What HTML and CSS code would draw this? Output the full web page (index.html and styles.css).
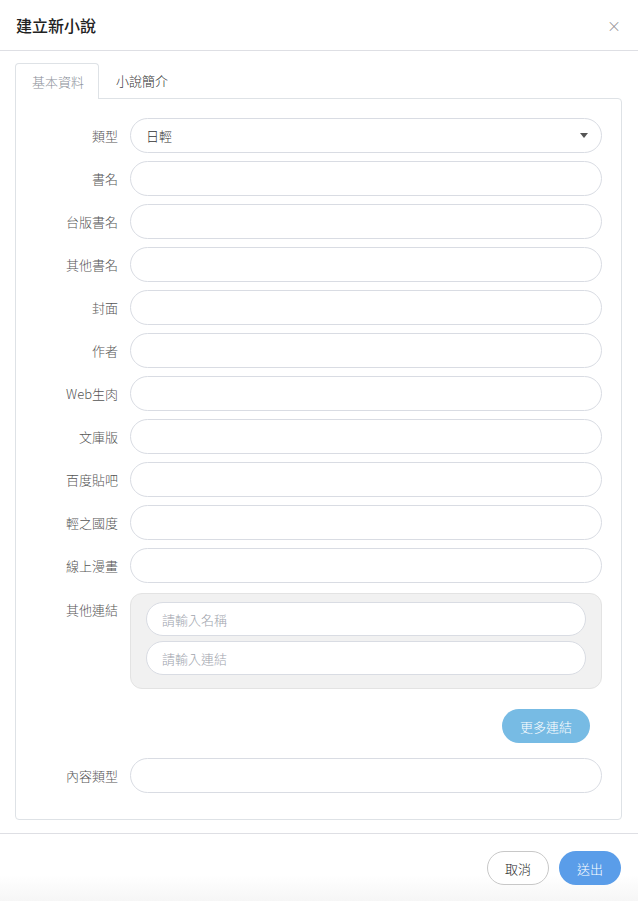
FILE: index.html
```html
<!DOCTYPE html>
<html lang="zh-Hant">
<head>
  <meta charset="UTF-8" />
  <title>建立新小說</title>
  <link rel="stylesheet" href="styles.css">
</head>
<body>
  <div class="modal">
    <div class="modal-header">
      <h3>建立新小說</h3>
      <span class="close">×</span>
    </div>

    <div class="modal-body">
      <div class="tabs">
        <div class="tab active">基本資料</div>
        <div class="tab">小說簡介</div>
      </div>

      <div class="panel">
        <div class="row">
          <label>類型</label>
          <div class="select">
            <span>日輕</span>
            <span class="caret"></span>
          </div>
        </div>
        <div class="row"><label>書名</label><input type="text"></div>
        <div class="row"><label>台版書名</label><input type="text"></div>
        <div class="row"><label>其他書名</label><input type="text"></div>
        <div class="row"><label>封面</label><input type="text"></div>
        <div class="row"><label>作者</label><input type="text"></div>
        <div class="row"><label>Web生肉</label><input type="text"></div>
        <div class="row"><label>文庫版</label><input type="text"></div>
        <div class="row"><label>百度貼吧</label><input type="text"></div>
        <div class="row"><label>輕之國度</label><input type="text"></div>
        <div class="row"><label>線上漫畫</label><input type="text"></div>

        <div class="row row-top">
          <label class="label-top">其他連結</label>
          <div class="link-box">
            <input type="text" placeholder="請輸入名稱">
            <input type="text" placeholder="請輸入連結">
          </div>
        </div>

        <div class="more-row">
          <button class="btn-more">更多連結</button>
        </div>

        <div class="row"><label>內容類型</label><input type="text"></div>
      </div>
    </div>

    <div class="modal-footer">
      <button class="btn-cancel">取消</button>
      <button class="btn-submit">送出</button>
    </div>
  </div>
</body>
</html>
```

FILE: styles.css
```css
* {
  box-sizing: border-box;
}
body {
  margin: 0;
  font-family: "Noto Sans CJK TC", "Noto Sans", sans-serif;
  font-weight: 300;
  background: #fff;
  color: #303133;
}
.modal {
  width: 638px;
  height: 901px;
  background: linear-gradient(#fff 875px, #f6f6f6 901px);
}
.modal-header {
  height: 51px;
  display: flex;
  align-items: center;
  justify-content: space-between;
  padding: 0 16px;
  border-bottom: 1px solid #dedfe4;
}
.modal-header h3 {
  margin: 0;
  font-size: 16px;
  font-weight: 500;
  color: #222;
}
.close {
  font-size: 14px;
  color: #888;
  margin-right: 1px;
}
.modal-body {
  padding: 12px 16px 13px 15px;
  border-bottom: 1px solid #dedfe4;
}
.tabs {
  display: flex;
  height: 35px;
}
.tab {
  font-size: 13px;
  line-height: 35px;
  padding: 0 17px;
  color: #333;
  white-space: nowrap;
}
.tab.active {
  color: #8a8f98;
  border: 1px solid #dee2e6;
  border-bottom: none;
  border-radius: 4px 4px 0 0;
  background: #fff;
  position: relative;
  margin-bottom: -1px;
  height: 36px;
  width: 84px;
  padding: 0 0 0 16px;
}
.panel {
  border: 1px solid #dee2e6;
  border-radius: 0 4px 4px 4px;
  padding: 19px 19px 26px 0;
}
.row {
  display: flex;
  align-items: center;
  margin-bottom: 8px;
}
.row:last-child {
  margin-bottom: 0;
}
.row-top {
  align-items: flex-start;
  padding-top: 2px;
}
.row label {
  width: 102px;
  text-align: right;
  font-size: 13px;
  color: #555;
  margin-right: 12px;
  flex-shrink: 0;
}
.row .label-top {
  padding-top: 7px;
}
input, .select {
  flex: 1;
  height: 35px;
  border: 1px solid #d9dce3;
  border-radius: 18px;
  padding: 0 15px;
  font-family: inherit;
  font-weight: 300;
  font-size: 13px;
  background: #fff;
  outline: none;
}
input::placeholder {
  color: #a0a4ad;
}
.select {
  display: flex;
  align-items: center;
  justify-content: space-between;
  color: #333;
  padding-right: 13px;
}
.caret {
  width: 0;
  height: 0;
  border-left: 4px solid transparent;
  border-right: 4px solid transparent;
  border-top: 5px solid #555;
}
.link-box {
  flex: 1;
  background: #f1f1f1;
  border: 1px solid #e3e3e3;
  border-radius: 12px;
  padding: 8px 15px 13px;
  display: flex;
  flex-direction: column;
  gap: 5px;
}
.link-box input {
  flex: none;
  height: 34px;
}
.more-row {
  display: flex;
  justify-content: flex-end;
  padding: 12px 12px 15px 0;
}
button {
  font-family: inherit;
  font-weight: 300;
  font-size: 13px;
  border-radius: 17px;
  cursor: pointer;
}
.btn-more {
  width: 88px;
  height: 34px;
  border: none;
  color: #fff;
  background: #77bbe4;
}
.modal-footer {
  display: flex;
  justify-content: flex-end;
  gap: 10px;
  padding: 17px 17px 0 0;
}
.btn-cancel {
  width: 62px;
  height: 34px;
  background: #fff;
  border: 1px solid #c8c8c8;
  color: #222;
}
.btn-submit {
  width: 62px;
  height: 34px;
  border: none;
  background: #5a9de9;
  color: #fff;
}
```
